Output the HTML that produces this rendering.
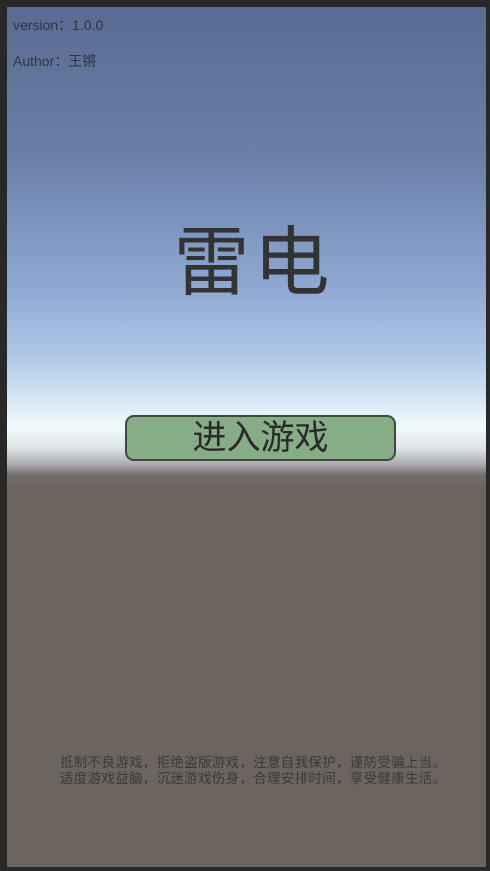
<!DOCTYPE html>
<html><head><meta charset="utf-8"><style>
html,body{margin:0;padding:0;width:490px;height:871px;background:#282828;overflow:hidden}
#c{position:absolute;left:7px;top:7px;width:479px;height:860px;
background:linear-gradient(to bottom,#5a6b91 0px,#6a7fa8 150px,#8ea8d2 280px,#b0c8e8 350px,#dcecf6 400px,#f0fafc 420px,#dfe6ea 440px,#a9a9ab 458px,#756e6a 468px,#6b645f 480px,#6b645f 860px);
font-family:"Liberation Sans","Noto Sans CJK SC",sans-serif;color:#333}
.t{position:absolute;left:6px;font-size:14px;color:#2e3440}
#title{position:absolute;left:0;width:493px;text-align:center;top:212px;font-size:76px;line-height:90px;color:#333;letter-spacing:4px}
#btn{position:absolute;left:118px;top:408px;width:267px;height:42px;background:#86ad86;border:2px solid #3e4a3e;border-radius:9px;text-align:center;font-size:34px;line-height:42px;color:#2a2a2a;letter-spacing:0px}
.f{position:absolute;left:53px;font-size:13.5px;line-height:16px;color:#3a3a3a;letter-spacing:0.3px;white-space:nowrap}
</style></head><body><div id="c">
<div class="t" style="top:8px">version：1.0.0</div>
<div class="t" style="top:44px">Author：王锵</div>
<div id="title">雷电</div>
<div id="btn">进入游戏</div>
<div class="f" style="top:748px">抵制不良游戏，拒绝盗版游戏，注意自我保护，谨防受骗上当。</div>
<div class="f" style="top:764px">适度游戏益脑，沉迷游戏伤身，合理安排时间，享受健康生活。</div>
</div></body></html>
